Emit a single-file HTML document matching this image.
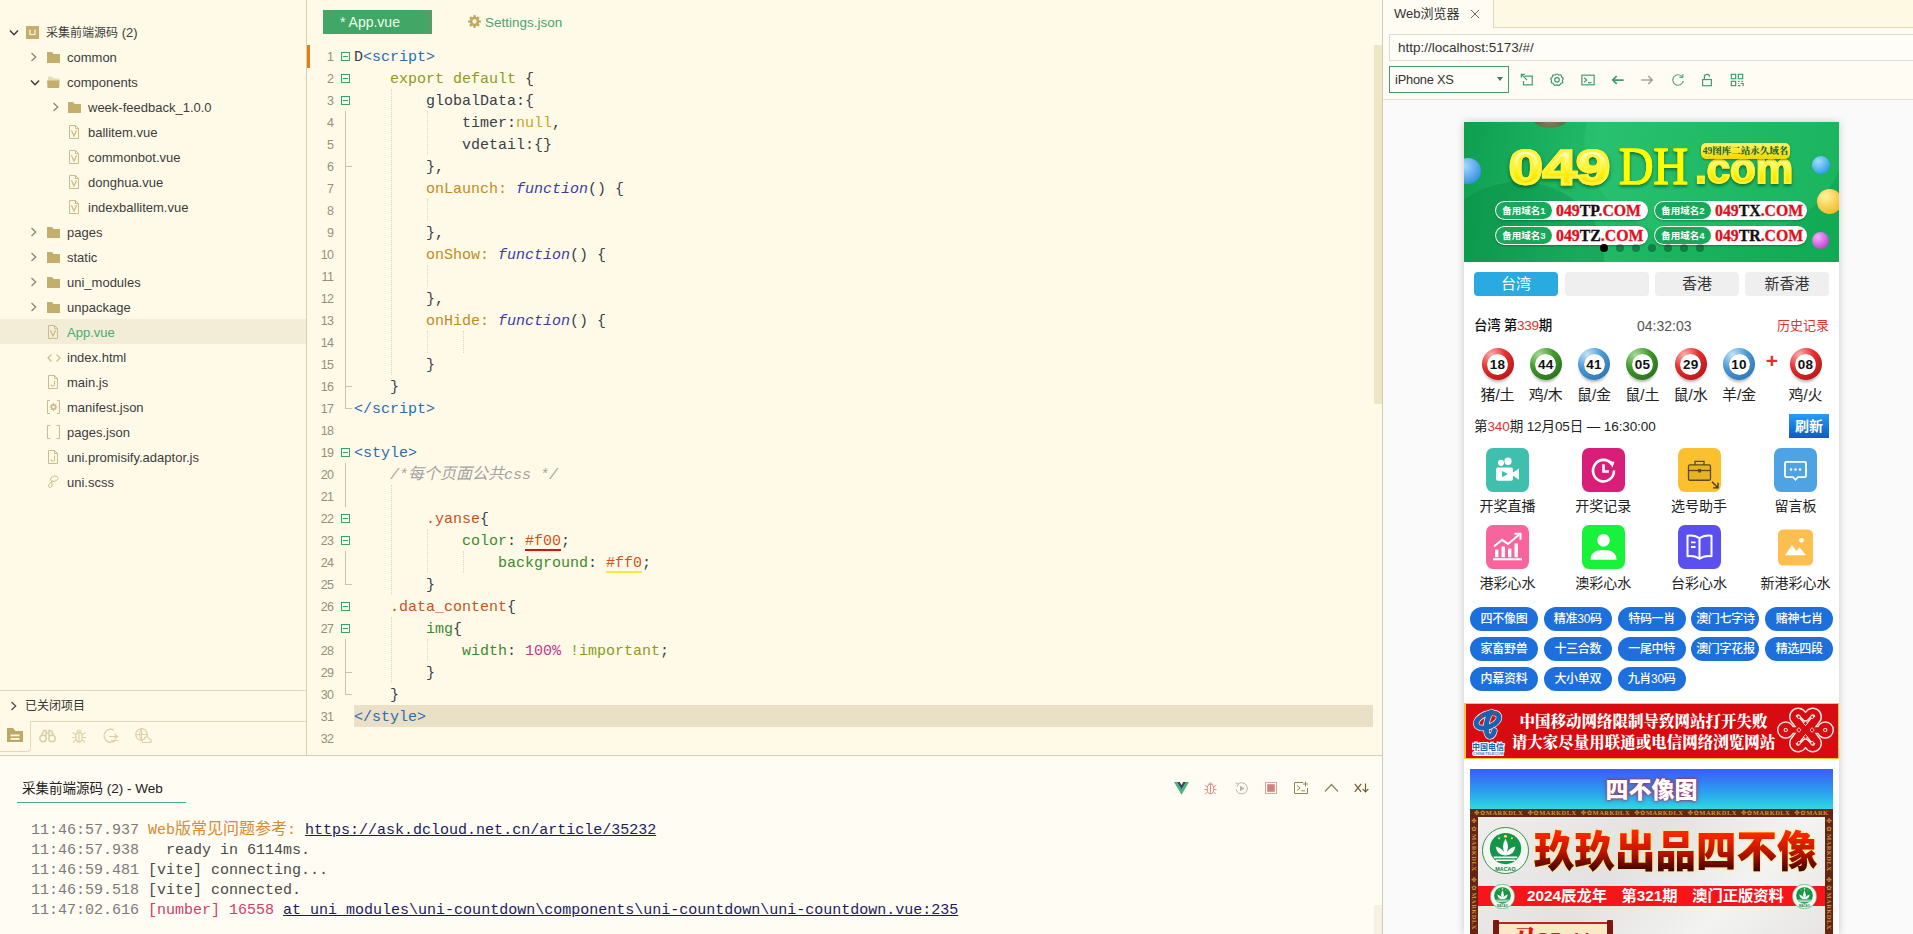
<!DOCTYPE html>
<html lang="zh-CN">
<head>
<meta charset="utf-8">
<title>HBuilderX</title>
<style>
*{box-sizing:border-box;margin:0;padding:0}
html,body{width:1913px;height:934px;overflow:hidden;background:#fffae8}
body{position:relative;font-family:"Liberation Sans","Noto Sans CJK SC",sans-serif;font-size:13px;color:#3c3c3c}
.abs{position:absolute}
/* ---------- sidebar ---------- */
#side{position:absolute;left:0;top:0;width:307px;height:755px;background:#fffae8;border-right:1px solid #dacfae}
.row{position:absolute;left:0;width:306px;height:25px;line-height:27px;font-size:13px;color:#3c3c3c;white-space:nowrap}
.row.sel{background:#f3ecd7}
.row .lbl{position:absolute;top:0}
.row svg{position:absolute}
/* ---------- editor ---------- */
#ed{position:absolute;left:307px;top:0;width:1075px;height:755px;background:#fffae8}
.tab1{position:absolute;left:16px;top:10px;width:109px;height:24px;background:linear-gradient(90deg,#42a766 0,#42a766 93%,#5b9b68 100%);color:#e6ffe9;font-size:14px;line-height:25px;padding-left:17px}
.tab2{position:absolute;left:178px;top:10px;height:24px;line-height:25.5px;font-size:13.5px;color:#46a570}
.ln{position:absolute;left:0;width:27px;text-align:right;font-family:"Liberation Sans",sans-serif;font-size:12.5px;letter-spacing:-0.7px;color:#969078;height:22px;line-height:25.5px;width:26.2px}
.cl{position:absolute;left:47px;height:22px;line-height:25.5px;font-family:"Liberation Mono","Noto Sans CJK SC",monospace;font-size:15px;color:#39404a;white-space:pre}
.fb{position:absolute;left:34px;width:9px;height:9px;border:1px solid #3f9d72}
.fb:after{content:"";position:absolute;left:1px;top:3px;width:5px;height:1px;background:#3f9d72}
.tg{color:#2b6cb3}.kw{color:#8c9a22}.nl{color:#c7a526}.pr{color:#bf8c1c}.fn{color:#3a3aa8;font-style:italic}
.ul{position:relative}.ul:after{content:"";position:absolute;left:0;right:0;bottom:-1px;height:2px;background:var(--u)}
.cm{color:#a3a3a3;font-style:italic}.cj{font-size:16px}.sl{color:#c8521e}.cp{color:#3c8a2e}.hx{color:#d0521c}.nm{color:#c4368c}.im{color:#8c9a22}
/* ---------- console ---------- */
#con{position:absolute;left:0;top:755px;width:1382px;height:179px;background:#fffcf3;border-top:1px solid #dacfae}
.cline{position:absolute;left:31px;height:20px;line-height:23.5px;font-family:"Liberation Mono","Noto Sans CJK SC",monospace;font-size:15px;color:#4a4a4a;white-space:pre}
.ts{color:#7b7b7b}.or{color:#d98a2e}.lk{color:#1b1b64;text-decoration:underline}.pk{color:#d0406c}
/* ---------- right panel ---------- */
#rp{position:absolute;left:1382px;top:0;width:531px;height:934px;background:#fafafa;border-left:1px solid #d2cbb4}

/* ---------- phone ---------- */
#ph{position:absolute;top:122px;width:375px;height:812px;background:#fff;box-shadow:0 0 8px rgba(0,0,0,.2);overflow:hidden;font-family:"Liberation Sans","Noto Sans CJK SC",sans-serif}
#ph .abs{position:absolute}
.bn{position:absolute;left:0;top:0;width:375px;height:140px;overflow:hidden;background:linear-gradient(100deg,#0e9f50 0%,#22bb69 35%,#18b25c 65%,#10aa54 100%)}
.big{position:absolute;white-space:nowrap;line-height:normal;transform-origin:0 50%;background:linear-gradient(#ffffd8 18%,#fff75a 45%,#ffee00 62%,#ffd800 88%);-webkit-background-clip:text;background-clip:text;color:transparent;filter:drop-shadow(0 2px 1.5px rgba(0,70,20,.6))}
.big.b1{font-family:"Liberation Sans",sans-serif;font-weight:700;-webkit-text-stroke:2.8px #fff23a;paint-order:stroke fill}
.big.b2{font-family:"Liberation Serif",serif;font-weight:400;background:#ffff00;-webkit-background-clip:text;background-clip:text;-webkit-text-stroke:1.2px #ffff00}
.ytag{position:absolute;width:89px;height:16px;border-radius:5px;background:linear-gradient(#fff36a,#f4d800);color:#1c6a2a;font-family:"Liberation Serif","Noto Serif CJK SC",serif;font-weight:900;font-size:9.5px;line-height:16px;text-align:center;white-space:nowrap;box-shadow:0 1px 2px rgba(0,60,20,.5)}
.dp{position:absolute;width:153px;height:19px;border-radius:10px;background:#fff;overflow:hidden;white-space:nowrap;box-shadow:0 1px 2px rgba(0,60,20,.4)}
.dp .dl{position:absolute;left:1px;top:1px;width:56px;height:17px;border-radius:9px;background:#19a85a;color:#fff;font-size:9.5px;line-height:17px;text-align:center;font-weight:700}
.dp .dd{position:absolute;left:61px;top:0;line-height:20px;font-family:"Liberation Serif",serif;font-weight:700;font-size:15.8px;color:#111;letter-spacing:0;-webkit-text-stroke:0.3px currentColor}
.dp .dd i{font-style:normal;color:#e0101c}
.rt{position:absolute;width:84px;height:24px;border-radius:4px;background:#efefef;color:#333;font-size:15px;line-height:24px;text-align:center}
.rt.on{background:#29abe2;color:#fff}
.t14{position:absolute;font-size:13.5px;line-height:20px;white-space:nowrap}
.rd{color:#e3312d}
.ball{position:absolute;width:32px;height:32px;border-radius:50%;box-shadow:0 4px 3px -2px rgba(0,0,0,.3)}
.ball b{position:absolute;left:5.5px;top:5.5px;width:21px;height:21px;border-radius:50%;background:#fff;color:#111;font-size:13.5px;line-height:21px;text-align:center;font-weight:700;letter-spacing:0.2px;box-shadow:0 0 1px rgba(0,0,0,.35)}
.bl{position:absolute;width:60px;text-align:center;font-size:15px;line-height:20px;color:#222;white-space:nowrap}
.rf{position:absolute;width:40px;height:24px;background:linear-gradient(#2a9df4,#0b5cc2);color:#fff;font-size:14px;font-weight:700;line-height:24px;text-align:center}
.il{position:absolute;width:90px;text-align:center;font-size:14px;line-height:20px;color:#222;white-space:nowrap}
.pl{position:absolute;width:68px;height:24px;border-radius:12px;background:#1d6fdb;color:#fff;font-size:12px;line-height:25px;text-align:center;white-space:nowrap;letter-spacing:-0.3px;font-weight:500}
.rn{position:absolute;width:375px;height:56px;background:#d60c10;border:1px solid #f8c832;border-left-width:2px}
.rl{position:absolute;left:0;width:373px;text-align:center;font-family:"Liberation Serif","Noto Serif CJK SC",serif;font-weight:900;font-size:15.5px;line-height:21px;color:#fff;white-space:nowrap}
.tt{position:absolute;width:363px;height:41px;background:linear-gradient(#3d5cf8 0%,#2a9ef0 55%,#2fdde0 100%);color:#fff;font-size:23px;font-weight:900;line-height:42px;text-align:center;text-shadow:0 0 3px #a83060,0 0 2px #a83060,0 0 5px rgba(150,40,110,.6)}
.pic{position:absolute;width:363px;height:140px;background:#662412;padding:8px 8px 0 8px}
.mk{position:absolute;color:#c8963e;font-family:"Liberation Serif","DejaVu Sans",serif;font-weight:700;font-size:6.5px;line-height:8px;white-space:nowrap;overflow:hidden;letter-spacing:0.45px}
.pin{position:relative;width:347px;height:132px;background:linear-gradient(135deg,#efeeec,#e3e2e0 40%,#f3f3f1 70%,#e5e4e2);overflow:hidden}
.hl{position:absolute;left:56px;top:9px;white-space:nowrap;font-size:40.5px;line-height:48px;font-weight:900;letter-spacing:0;transform:scaleY(1.08);transform-origin:50% 0;background:linear-gradient(#ff2800 12%,#c01400 50%,#2a0000 92%);-webkit-background-clip:text;background-clip:text;color:transparent;filter:drop-shadow(0 0 0.7px #ffcf00) drop-shadow(0 0 0.7px #ffcf00) drop-shadow(0 0 1px #ffe680)}
.strip{position:absolute;left:0;top:69px;width:347px;height:20px;background:#f81418;color:#fff;font-size:15.3px;font-weight:700;line-height:19px;text-align:center;white-space:nowrap;word-spacing:3px;text-indent:8px}
.scr{position:absolute;left:19px;top:105px;width:112px;height:40px;background:#fbe8c6;border-top:2px solid #b8281e;overflow:hidden;font-family:"Liberation Serif","Noto Serif CJK SC",serif;font-weight:900;font-size:24px;line-height:26px;color:#e01818;text-align:center;white-space:nowrap;padding-top:3px}
.rod{position:absolute;top:103px;width:6px;height:40px;background:#7a1812;border-radius:1px}
</style>
</head>
<body>
<div id="side">
<div class="row" style="top:19px"><svg style="left:8.5px;top:9.5px" width="10" height="8" viewBox="0 0 10 8"><path d="M1 1.5 L5 5.7 L9 1.5" fill="none" stroke="#3a3a3a" stroke-width="1.5"/></svg><svg style="left:25.5px;top:6.5px" width="13" height="13" viewBox="0 0 13 13"><rect width="13" height="13" fill="#c4ae6b"/><path d="M4 3.5 V8.5 H9 V3.5" fill="none" stroke="#fffae8" stroke-width="1.2"/></svg><span class="lbl" style="left:46px"><span style="font-size:12px">采集前端源码</span> (2)</span></div>
<div class="row" style="top:44px"><svg style="left:30px;top:8px" width="8" height="10" viewBox="0 0 8 10"><path d="M1.5 1 L5.7 5 L1.5 9" fill="none" stroke="#8c8670" stroke-width="1.3"/></svg><svg style="left:46.7px;top:7.5px" width="13" height="11" viewBox="0 0 13 11"><path d="M0 0 H5 L6.5 2 H13 V11 H0 Z" fill="#c4ae6b"/></svg><span class="lbl" style="left:67px">common</span></div>
<div class="row" style="top:69px"><svg style="left:29.5px;top:9.5px" width="10" height="8" viewBox="0 0 10 8"><path d="M1 1.5 L5 5.7 L9 1.5" fill="none" stroke="#3a3a3a" stroke-width="1.5"/></svg><svg style="left:46.5px;top:6.5px" width="13" height="12" viewBox="0 0 13 12"><path d="M1 0.5 H5 L6.5 2.5 H12.5 V11 H1 Z" fill="#e6dcb8"/><path d="M0 4.5 H12.5 L12 12 H0.5 Z" fill="#c4ae6b"/></svg><span class="lbl" style="left:67px">components</span></div>
<div class="row" style="top:94px"><svg style="left:52px;top:8px" width="8" height="10" viewBox="0 0 8 10"><path d="M1.5 1 L5.7 5 L1.5 9" fill="none" stroke="#8c8670" stroke-width="1.3"/></svg><svg style="left:67.7px;top:7.5px" width="13" height="11" viewBox="0 0 13 11"><path d="M0 0 H5 L6.5 2 H13 V11 H0 Z" fill="#c4ae6b"/></svg><span class="lbl" style="left:88px">week-feedback_1.0.0</span></div>
<div class="row" style="top:119px"><svg style="left:68px;top:6px" width="12" height="14" viewBox="0 0 12 14"><path d="M1.5 0.5 H7.5 L10.5 3.5 V13.5 H1.5 Z" fill="none" stroke="#cbbd8a" stroke-width="1"/><path d="M7.5 0.5 V3.5 H10.5" fill="none" stroke="#cbbd8a" stroke-width="1"/><path d="M3.4 5.3 L6 11 L8.6 5.3" fill="none" stroke="#cbbd8a" stroke-width="1.3"/></svg><span class="lbl" style="left:88px">ballitem.vue</span></div>
<div class="row" style="top:144px"><svg style="left:68px;top:6px" width="12" height="14" viewBox="0 0 12 14"><path d="M1.5 0.5 H7.5 L10.5 3.5 V13.5 H1.5 Z" fill="none" stroke="#cbbd8a" stroke-width="1"/><path d="M7.5 0.5 V3.5 H10.5" fill="none" stroke="#cbbd8a" stroke-width="1"/><path d="M3.4 5.3 L6 11 L8.6 5.3" fill="none" stroke="#cbbd8a" stroke-width="1.3"/></svg><span class="lbl" style="left:88px">commonbot.vue</span></div>
<div class="row" style="top:169px"><svg style="left:68px;top:6px" width="12" height="14" viewBox="0 0 12 14"><path d="M1.5 0.5 H7.5 L10.5 3.5 V13.5 H1.5 Z" fill="none" stroke="#cbbd8a" stroke-width="1"/><path d="M7.5 0.5 V3.5 H10.5" fill="none" stroke="#cbbd8a" stroke-width="1"/><path d="M3.4 5.3 L6 11 L8.6 5.3" fill="none" stroke="#cbbd8a" stroke-width="1.3"/></svg><span class="lbl" style="left:88px">donghua.vue</span></div>
<div class="row" style="top:194px"><svg style="left:68px;top:6px" width="12" height="14" viewBox="0 0 12 14"><path d="M1.5 0.5 H7.5 L10.5 3.5 V13.5 H1.5 Z" fill="none" stroke="#cbbd8a" stroke-width="1"/><path d="M7.5 0.5 V3.5 H10.5" fill="none" stroke="#cbbd8a" stroke-width="1"/><path d="M3.4 5.3 L6 11 L8.6 5.3" fill="none" stroke="#cbbd8a" stroke-width="1.3"/></svg><span class="lbl" style="left:88px">indexballitem.vue</span></div>
<div class="row" style="top:219px"><svg style="left:30px;top:8px" width="8" height="10" viewBox="0 0 8 10"><path d="M1.5 1 L5.7 5 L1.5 9" fill="none" stroke="#8c8670" stroke-width="1.3"/></svg><svg style="left:46.7px;top:7.5px" width="13" height="11" viewBox="0 0 13 11"><path d="M0 0 H5 L6.5 2 H13 V11 H0 Z" fill="#c4ae6b"/></svg><span class="lbl" style="left:67px">pages</span></div>
<div class="row" style="top:244px"><svg style="left:30px;top:8px" width="8" height="10" viewBox="0 0 8 10"><path d="M1.5 1 L5.7 5 L1.5 9" fill="none" stroke="#8c8670" stroke-width="1.3"/></svg><svg style="left:46.7px;top:7.5px" width="13" height="11" viewBox="0 0 13 11"><path d="M0 0 H5 L6.5 2 H13 V11 H0 Z" fill="#c4ae6b"/></svg><span class="lbl" style="left:67px">static</span></div>
<div class="row" style="top:269px"><svg style="left:30px;top:8px" width="8" height="10" viewBox="0 0 8 10"><path d="M1.5 1 L5.7 5 L1.5 9" fill="none" stroke="#8c8670" stroke-width="1.3"/></svg><svg style="left:46.7px;top:7.5px" width="13" height="11" viewBox="0 0 13 11"><path d="M0 0 H5 L6.5 2 H13 V11 H0 Z" fill="#c4ae6b"/></svg><span class="lbl" style="left:67px">uni_modules</span></div>
<div class="row" style="top:294px"><svg style="left:30px;top:8px" width="8" height="10" viewBox="0 0 8 10"><path d="M1.5 1 L5.7 5 L1.5 9" fill="none" stroke="#8c8670" stroke-width="1.3"/></svg><svg style="left:46.7px;top:7.5px" width="13" height="11" viewBox="0 0 13 11"><path d="M0 0 H5 L6.5 2 H13 V11 H0 Z" fill="#c4ae6b"/></svg><span class="lbl" style="left:67px">unpackage</span></div>
<div class="row sel" style="top:319px"><svg style="left:47px;top:6px" width="12" height="14" viewBox="0 0 12 14"><path d="M1.5 0.5 H7.5 L10.5 3.5 V13.5 H1.5 Z" fill="none" stroke="#cbbd8a" stroke-width="1"/><path d="M7.5 0.5 V3.5 H10.5" fill="none" stroke="#cbbd8a" stroke-width="1"/><path d="M3.4 5.3 L6 11 L8.6 5.3" fill="none" stroke="#cbbd8a" stroke-width="1.3"/></svg><span class="lbl" style="left:67px;color:#45ad6e">App.vue</span></div>
<div class="row" style="top:344px"><svg style="left:46.5px;top:8.5px" width="14" height="10" viewBox="0 0 14 10"><path d="M4.5 1.5 L1 5 L4.5 8.5 M9.5 1.5 L13 5 L9.5 8.5" fill="none" stroke="#cbbd8a" stroke-width="1.2"/></svg><span class="lbl" style="left:67px">index.html</span></div>
<div class="row" style="top:369px"><svg style="left:47px;top:6px" width="12" height="14" viewBox="0 0 12 14"><path d="M1.5 0.5 H7.5 L10.5 3.5 V13.5 H1.5 Z" fill="none" stroke="#cbbd8a" stroke-width="1"/><path d="M7.5 0.5 V3.5 H10.5" fill="none" stroke="#cbbd8a" stroke-width="1"/><path d="M7.5 5.5 V10 Q7.5 11 6.2 11 H4.2 V9.5" fill="none" stroke="#cbbd8a" stroke-width="1"/></svg><span class="lbl" style="left:67px">main.js</span></div>
<div class="row" style="top:394px"><svg style="left:47px;top:6px" width="13" height="14" viewBox="0 0 13 14"><path d="M3 0.5 H0.5 V13.5 H3 M10 0.5 H12.5 V13.5 H10" fill="none" stroke="#cbbd8a" stroke-width="1"/><circle cx="6.5" cy="7" r="2.1" fill="none" stroke="#cbbd8a" stroke-width="1.6"/><path d="M6.5 3.1 V4.5 M6.5 9.5 V10.9 M2.6 7 H4 M9 7 H10.4 M3.8 4.3 L4.8 5.3 M8.2 8.7 L9.2 9.7 M9.2 4.3 L8.2 5.3 M3.8 9.7 L4.8 8.7" stroke="#cbbd8a" stroke-width="1.2"/></svg><span class="lbl" style="left:67px">manifest.json</span></div>
<div class="row" style="top:419px"><svg style="left:47px;top:6px" width="13" height="14" viewBox="0 0 13 14"><path d="M3.5 0.5 H0.5 V13.5 H3.5 M9.5 0.5 H12.5 V13.5 H9.5" fill="none" stroke="#cbbd8a" stroke-width="1"/></svg><span class="lbl" style="left:67px">pages.json</span></div>
<div class="row" style="top:444px"><svg style="left:47px;top:6px" width="12" height="14" viewBox="0 0 12 14"><path d="M1.5 0.5 H7.5 L10.5 3.5 V13.5 H1.5 Z" fill="none" stroke="#cbbd8a" stroke-width="1"/><path d="M7.5 0.5 V3.5 H10.5" fill="none" stroke="#cbbd8a" stroke-width="1"/><path d="M7.5 5.5 V10 Q7.5 11 6.2 11 H4.2 V9.5" fill="none" stroke="#cbbd8a" stroke-width="1"/></svg><span class="lbl" style="left:67px">uni.promisify.adaptor.js</span></div>
<div class="row" style="top:469px"><svg style="left:47px;top:6px" width="13" height="14" viewBox="0 0 13 14"><path d="M11.5 3.5 Q11 0.8 7.5 1 Q4 1.5 3.5 4 Q3.5 6 6 6.5 Q9.5 6.5 11 4 M5 6.5 Q2 8 1.5 10.5 Q1.5 12.8 3.5 12.5 Q5.5 12 5 9 Q4.8 7.5 5 6.5" fill="none" stroke="#cbbd8a" stroke-width="1"/></svg><span class="lbl" style="left:67px">uni.scss</span></div>
<div class="abs" style="left:0;top:690px;width:306px;height:1px;background:#e3d9b5"></div>
<div class="row" style="top:693px"><svg style="left:10px;top:8px" width="8" height="10" viewBox="0 0 8 10"><path d="M1.5 1 L5.7 5 L1.5 9" fill="none" stroke="#4a4a4a" stroke-width="1.3"/></svg><span class="lbl" style="left:25px;color:#333;font-size:12px">已关闭项目</span></div>
<div class="abs" style="left:30px;top:721px;width:276px;height:1px;background:#e3d9b5"></div>
<div class="abs" style="left:-1px;top:721px;width:32px;height:31px;border:1px solid #e3d9b5;border-top:none;border-bottom-right-radius:4px;background:#fffae8"></div>
<svg class="abs" style="left:7px;top:728px" width="16" height="14" viewBox="0 0 16 14"><path d="M0 0 H6 L8.5 3 H16 V14 H0 Z" fill="#bda866"/><rect x="3.5" y="6.5" width="9" height="1.8" fill="#fffae8"/><rect x="3.5" y="10" width="9" height="1.8" fill="#fffae8"/></svg>
<svg class="abs" style="left:39px;top:729px" width="17" height="14" viewBox="0 0 17 14"><circle cx="4" cy="9.5" r="3.2" fill="none" stroke="#dbd1a8" stroke-width="1.6"/><circle cx="13" cy="9.5" r="3.2" fill="none" stroke="#dbd1a8" stroke-width="1.6"/><path d="M2.5 6 L5 1.5 H7 V7 M14.5 6 L12 1.5 H10 V7 M7 4 H10" fill="none" stroke="#dbd1a8" stroke-width="1.6"/></svg>
<svg class="abs" style="left:71px;top:728px" width="16" height="16" viewBox="0 0 16 16"><ellipse cx="8" cy="9" rx="3.2" ry="5" fill="none" stroke="#dbd1a8" stroke-width="1.3"/><path d="M8 4 V14 M5.5 3.5 Q8 0.5 10.5 3.5 M4.8 6.5 L1.5 4.5 M11.2 6.5 L14.5 4.5 M4.8 9.5 H1 M11.2 9.5 H15 M5 12 L2 14.5 M11 12 L14 14.5" fill="none" stroke="#dbd1a8" stroke-width="1.2"/></svg>
<svg class="abs" style="left:103px;top:728px" width="17" height="16" viewBox="0 0 17 16"><path d="M11 2.2 A6.5 6.5 0 1 0 12.5 12" fill="none" stroke="#dbd1a8" stroke-width="1.3"/><path d="M6 8.5 H14 M11.5 6 L14.5 8.5 L11.5 11 M8 12.5 H15.5" fill="none" stroke="#dbd1a8" stroke-width="1.2"/></svg>
<svg class="abs" style="left:135px;top:728px" width="17" height="16" viewBox="0 0 17 16"><circle cx="6.5" cy="6.5" r="5.8" fill="none" stroke="#dbd1a8" stroke-width="1.2"/><path d="M6.5 0.7 V12 M0.7 6.5 H12 M6.5 0.7 Q2.5 6.5 6.5 12.3" fill="none" stroke="#dbd1a8" stroke-width="1"/><path d="M7.5 14.5 H14.5 Q16.5 14.5 16.2 12.5 Q16 11 14.3 11 Q13.8 8.5 11.3 8.8 Q9.3 9.2 9.2 11.2 Q7 11.3 7 13 Q7 14.5 7.5 14.5 Z" fill="#fffae8" stroke="#dbd1a8" stroke-width="1.2"/></svg>
</div>
<div id="ed">
<div class="tab1">* App.vue</div>
<svg class="abs" style="left:161px;top:15px" width="13" height="13" viewBox="-6.5 -6.5 13 13"><circle r="3.4" fill="none" stroke="#bfa960" stroke-width="2.5"/><g fill="#bfa960"><rect x="-1.25" y="-6.3" width="2.5" height="2.6" transform="rotate(0)"/><rect x="-1.25" y="-6.3" width="2.5" height="2.6" transform="rotate(45)"/><rect x="-1.25" y="-6.3" width="2.5" height="2.6" transform="rotate(90)"/><rect x="-1.25" y="-6.3" width="2.5" height="2.6" transform="rotate(135)"/><rect x="-1.25" y="-6.3" width="2.5" height="2.6" transform="rotate(180)"/><rect x="-1.25" y="-6.3" width="2.5" height="2.6" transform="rotate(225)"/><rect x="-1.25" y="-6.3" width="2.5" height="2.6" transform="rotate(270)"/><rect x="-1.25" y="-6.3" width="2.5" height="2.6" transform="rotate(315)"/></g></svg>
<div class="tab2">Settings.json</div>
<div class="abs" style="left:0;top:45px;width:3px;height:23px;background:#e07f12"></div>
<div class="abs" style="left:47px;top:705px;width:1019px;height:22px;background:#e9e0c7"></div>
<div class="abs" style="left:84px;top:89px;width:0;height:286px;border-left:1px dotted #ddd5bc"></div>
<div class="abs" style="left:120px;top:111px;width:0;height:44px;border-left:1px dotted #ddd5bc"></div>
<div class="abs" style="left:120px;top:199px;width:0;height:22px;border-left:1px dotted #ddd5bc"></div>
<div class="abs" style="left:120px;top:265px;width:0;height:22px;border-left:1px dotted #ddd5bc"></div>
<div class="abs" style="left:120px;top:331px;width:0;height:22px;border-left:1px dotted #ddd5bc"></div>
<div class="abs" style="left:156px;top:331px;width:0;height:22px;border-left:1px dotted #ddd5bc"></div>
<div class="abs" style="left:84px;top:485px;width:0;height:110px;border-left:1px dotted #ddd5bc"></div>
<div class="abs" style="left:120px;top:529px;width:0;height:44px;border-left:1px dotted #ddd5bc"></div>
<div class="abs" style="left:156px;top:551px;width:0;height:22px;border-left:1px dotted #ddd5bc"></div>
<div class="abs" style="left:84px;top:617px;width:0;height:66px;border-left:1px dotted #ddd5bc"></div>
<div class="abs" style="left:120px;top:639px;width:0;height:22px;border-left:1px dotted #ddd5bc"></div>
<div class="abs" style="left:38px;top:111px;width:1px;height:298px;background:#c9c3ad"></div>
<div class="abs" style="left:38px;top:166px;width:7px;height:1px;background:#c9c3ad"></div>
<div class="abs" style="left:38px;top:386px;width:7px;height:1px;background:#c9c3ad"></div>
<div class="abs" style="left:38px;top:408px;width:7px;height:1px;background:#c9c3ad"></div>
<div class="abs" style="left:38px;top:463px;width:1px;height:44px;background:#c9c3ad"></div>
<div class="abs" style="left:38px;top:551px;width:1px;height:34px;background:#c9c3ad"></div>
<div class="abs" style="left:38px;top:584px;width:7px;height:1px;background:#c9c3ad"></div>
<div class="abs" style="left:38px;top:639px;width:1px;height:56px;background:#c9c3ad"></div>
<div class="abs" style="left:38px;top:672px;width:7px;height:1px;background:#c9c3ad"></div>
<div class="abs" style="left:38px;top:694px;width:7px;height:1px;background:#c9c3ad"></div>
<div class="ln" style="top:45px">1</div>
<div class="fb" style="top:52px"></div>
<div class="cl" style="top:45px">D<span class="tg">&lt;script&gt;</span></div>
<div class="ln" style="top:67px">2</div>
<div class="fb" style="top:74px"></div>
<div class="cl" style="top:67px">    <span class="kw">export default</span> {</div>
<div class="ln" style="top:89px">3</div>
<div class="fb" style="top:96px"></div>
<div class="cl" style="top:89px">        globalData:{</div>
<div class="ln" style="top:111px">4</div>
<div class="cl" style="top:111px">            timer:<span class="nl">null</span>,</div>
<div class="ln" style="top:133px">5</div>
<div class="cl" style="top:133px">            vdetail:{}</div>
<div class="ln" style="top:155px">6</div>
<div class="cl" style="top:155px">        },</div>
<div class="ln" style="top:177px">7</div>
<div class="cl" style="top:177px">        <span class="pr">onLaunch:</span> <span class="fn">function</span>() {</div>
<div class="ln" style="top:199px">8</div>
<div class="ln" style="top:221px">9</div>
<div class="cl" style="top:221px">        },</div>
<div class="ln" style="top:243px">10</div>
<div class="cl" style="top:243px">        <span class="pr">onShow:</span> <span class="fn">function</span>() {</div>
<div class="ln" style="top:265px">11</div>
<div class="ln" style="top:287px">12</div>
<div class="cl" style="top:287px">        },</div>
<div class="ln" style="top:309px">13</div>
<div class="cl" style="top:309px">        <span class="pr">onHide:</span> <span class="fn">function</span>() {</div>
<div class="ln" style="top:331px">14</div>
<div class="ln" style="top:353px">15</div>
<div class="cl" style="top:353px">        }</div>
<div class="ln" style="top:375px">16</div>
<div class="cl" style="top:375px">    }</div>
<div class="ln" style="top:397px">17</div>
<div class="cl" style="top:397px"><span class="tg">&lt;/script&gt;</span></div>
<div class="ln" style="top:419px">18</div>
<div class="ln" style="top:441px">19</div>
<div class="fb" style="top:448px"></div>
<div class="cl" style="top:441px"><span class="tg">&lt;style&gt;</span></div>
<div class="ln" style="top:463px">20</div>
<div class="cl" style="top:463px">    <span class="cm">/*<span class="cj">每个页面公共</span>css */</span></div>
<div class="ln" style="top:485px">21</div>
<div class="ln" style="top:507px">22</div>
<div class="fb" style="top:514px"></div>
<div class="cl" style="top:507px">        <span class="sl">.yanse</span>{</div>
<div class="ln" style="top:529px">23</div>
<div class="fb" style="top:536px"></div>
<div class="cl" style="top:529px">            <span class="cp">color</span>: <span class="hx ul" style="--u:#dc1010">#f00</span>;</div>
<div class="ln" style="top:551px">24</div>
<div class="cl" style="top:551px">                <span class="cp">background</span>: <span class="hx ul" style="--u:#f2ec38">#ff0</span>;</div>
<div class="ln" style="top:573px">25</div>
<div class="cl" style="top:573px">        }</div>
<div class="ln" style="top:595px">26</div>
<div class="fb" style="top:602px"></div>
<div class="cl" style="top:595px">    <span class="sl">.data_content</span>{</div>
<div class="ln" style="top:617px">27</div>
<div class="fb" style="top:624px"></div>
<div class="cl" style="top:617px">        <span class="cp">img</span>{</div>
<div class="ln" style="top:639px">28</div>
<div class="cl" style="top:639px">            <span class="cp">width</span>: <span class="nm">100%</span> <span class="im">!important</span>;</div>
<div class="ln" style="top:661px">29</div>
<div class="cl" style="top:661px">        }</div>
<div class="ln" style="top:683px">30</div>
<div class="cl" style="top:683px">    }</div>
<div class="ln" style="top:705px">31</div>
<div class="cl" style="top:705px"><span class="tg">&lt;/style&gt;</span></div>
<div class="ln" style="top:727px">32</div>
<div class="abs" style="left:1067px;top:45px;width:8px;height:359px;background:#eee6c4"></div>
</div>
<div id="con">
<div class="abs" style="left:22px;top:23px;font-size:13.5px;color:#222;line-height:20px">采集前端源码 (2) - Web</div>
<div class="abs" style="left:17px;top:46px;width:169px;height:1px;background:#4aa98a"></div>
<div class="cline" style="top:63px"><span class="ts">11:46:57.937</span> <span class="or">Web<span style="font-size:16px">版常见问题参考</span>: </span><span class="lk">https://ask.dcloud.net.cn/article/35232</span></div>
<div class="cline" style="top:83px"><span class="ts">11:46:57.938</span>   ready in 6114ms.</div>
<div class="cline" style="top:103px"><span class="ts">11:46:59.481</span> [vite] connecting...</div>
<div class="cline" style="top:123px"><span class="ts">11:46:59.518</span> [vite] connected.</div>
<div class="cline" style="top:143px"><span class="ts">11:47:02.616</span> <span class="pk">[number] 16558</span> <span class="lk">at uni_modules\uni-countdown\components\uni-countdown\uni-countdown.vue:235</span></div>
<svg class="abs" style="left:1174px;top:26px" width="15" height="13" viewBox="0 0 15 13"><path d="M0 0 H3 L7.5 7.6 L12 0 H15 L7.5 12.8 Z" fill="#41b883"/><path d="M3 0 H5.8 L7.5 2.9 L9.2 0 H12 L7.5 7.6 Z" fill="#35495e"/></svg>
<svg class="abs" style="left:1204px;top:24.5px" width="13" height="14" viewBox="0 0 13 14"><ellipse cx="6.5" cy="8" rx="3.3" ry="4.8" fill="none" stroke="#e08f8a" stroke-width="1"/><path d="M6.5 3.2 V12.8 M4.3 3.6 Q6.5 0.2 8.7 3.6 M3.3 6 L0.8 4.2 M9.7 6 L12.2 4.2 M3.2 8.5 H0.4 M9.8 8.5 H12.6 M3.6 11 L1 13 M9.4 11 L12 13" fill="none" stroke="#e08f8a" stroke-width="1"/></svg>
<svg class="abs" style="left:1234.5px;top:25px" width="13" height="14" viewBox="0 0 13 14"><path d="M3.2 3 A5.6 5.6 0 1 1 1.2 8.2" fill="none" stroke="#b7b5ac" stroke-width="1"/><path d="M0.6 1.8 L3.4 3.2 L2 5.8" fill="none" stroke="#b7b5ac" stroke-width="1"/><path d="M5 4.8 L9.6 7.5 L5 10.2 Z" fill="#b7b5ac"/></svg>
<svg class="abs" style="left:1265px;top:26px" width="12" height="12" viewBox="0 0 12 12"><rect x="0.5" y="0.5" width="11" height="11" fill="none" stroke="#dba4a2" stroke-width="1"/><rect x="2.2" y="2.2" width="7.6" height="7.6" fill="#d47f80"/></svg>
<svg class="abs" style="left:1294px;top:25px" width="15" height="14" viewBox="0 0 15 14"><path d="M9 1.5 H0.5 V12.5 H13.5 V7" fill="none" stroke="#8b8a52" stroke-width="1"/><path d="M3 4.5 L6 7 L3 9.5 M7.5 9.8 H11" fill="none" stroke="#8b8a52" stroke-width="1"/><path d="M11.5 0.5 V5.5 M9 3 H14" fill="none" stroke="#8b8a52" stroke-width="1"/></svg>
<svg class="abs" style="left:1324px;top:27px" width="15" height="10" viewBox="0 0 15 10"><path d="M1 8.5 L7.5 1.5 L14 8.5" fill="none" stroke="#8c8669" stroke-width="1.3"/></svg>
<svg class="abs" style="left:1353.5px;top:27px" width="16" height="10" viewBox="0 0 16 10"><path d="M0.8 0.8 L7.2 8.8 M7.2 0.8 L0.8 8.8" fill="none" stroke="#6e5d2c" stroke-width="1.2"/><path d="M11.5 0.5 V8.6 M8.6 5.8 L11.5 8.8 L14.4 5.8" fill="none" stroke="#6e5d2c" stroke-width="1.2"/></svg>
<div class="abs" style="left:1374px;top:149px;width:8px;height:30px;background:#f6f1e2"></div>
</div>
<div id="rp">
<div class="abs" style="left:0;top:0;width:530px;height:28px;background:#fdf9e3;border-bottom:1px solid #e3d9b5"></div>
<div class="abs" style="left:0;top:0;width:111px;height:28px;background:#fffcf3;border-right:1px solid #e3d9b5"></div>
<div class="abs" style="left:11px;top:3.5px;font-size:13px;line-height:20px;color:#333">Web浏览器</div>
<svg class="abs" style="left:87px;top:9px" width="10" height="10" viewBox="0 0 10 10"><path d="M1 1 L9 9 M9 1 L1 9" stroke="#666" stroke-width="1"/></svg>
<div class="abs" style="left:0;top:28px;width:530px;height:72px;background:#fffcf3;border-bottom:1px solid #e6dfc4"></div>
<div class="abs" style="left:6px;top:34px;width:540px;height:27px;border:1px solid #dfdcd0;background:#fffdf7;font-size:13.5px;line-height:26px;padding-left:8px;color:#333">http://localhost:5173/#/</div>
<div class="abs" style="left:6px;top:66px;width:120px;height:27px;border:1px solid #3f9d6c;background:#fffdf7;font-size:12.8px;letter-spacing:-0.2px;line-height:26px;padding-left:5px;color:#333">iPhone XS</div>
<div class="abs" style="left:113.5px;top:77px;width:0;height:0;border-left:3.5px solid transparent;border-right:3.5px solid transparent;border-top:4px solid #3b7a57"></div>
<svg class="abs" style="left:137.0px;top:72.5px" width="14" height="14" viewBox="0 0 16 16"><path d="M5 3.5 H14 V13.5 H4 V9" fill="none" stroke="#3f9d6c" stroke-width="1.35"/><path d="M1.5 1.5 L8 8 M1.5 5.5 V1.5 H5.5" fill="none" stroke="#3f9d6c" stroke-width="1.35"/></svg>
<svg class="abs" style="left:167.0px;top:72.5px" width="14" height="14" viewBox="0 0 16 16"><path d="M8 1 L10 2.3 L12.6 2.2 L13.4 4.6 L15.2 6.3 L14.2 8.5 L14.6 11 L12.3 12 L10.9 14.2 L8 13.6 L5.1 14.2 L3.7 12 L1.4 11 L1.8 8.5 L0.8 6.3 L2.6 4.6 L3.4 2.2 L6 2.3 Z" fill="none" stroke="#3f9d6c" stroke-width="1.35" stroke-linejoin="round"/><circle cx="8" cy="7.8" r="2.6" fill="none" stroke="#3f9d6c" stroke-width="1.35"/></svg>
<svg class="abs" style="left:198.0px;top:72.5px" width="14" height="14" viewBox="0 0 16 16"><rect x="1" y="2.5" width="14" height="11" fill="none" stroke="#3f9d6c" stroke-width="1.35"/><path d="M3.5 5.5 L6.5 8 L3.5 10.5 M8 11 H12" fill="none" stroke="#3f9d6c" stroke-width="1.35"/></svg>
<svg class="abs" style="left:228.0px;top:72.5px" width="14" height="14" viewBox="0 0 16 16"><path d="M14.5 8 H2 M6.5 3.5 L2 8 L6.5 12.5" fill="none" stroke="#3f9d6c" stroke-width="2"/></svg>
<svg class="abs" style="left:257.0px;top:72.5px" width="14" height="14" viewBox="0 0 16 16"><path d="M1.5 8 H14 M9.5 3.5 L14 8 L9.5 12.5" fill="none" stroke="#a3a3a3" stroke-width="1.8"/></svg>
<svg class="abs" style="left:288.0px;top:72.5px" width="14" height="14" viewBox="0 0 16 16"><path d="M13 4.5 A6 6 0 1 0 14 9" fill="none" stroke="#5aa880" stroke-width="1.3"/><path d="M13.5 1 V5 H9.5" fill="none" stroke="#5aa880" stroke-width="1.3"/></svg>
<svg class="abs" style="left:317.0px;top:72.5px" width="14" height="14" viewBox="0 0 16 16"><rect x="3" y="7.5" width="10" height="7" fill="none" stroke="#3f9d6c" stroke-width="1.35"/><path d="M5 7.5 V5 A3 3 0 0 1 11 4.2" fill="none" stroke="#3f9d6c" stroke-width="1.35"/></svg>
<svg class="abs" style="left:347.0px;top:72.5px" width="14" height="14" viewBox="0 0 16 16"><rect x="1.5" y="1.5" width="5" height="5" fill="none" stroke="#3f9d6c" stroke-width="1.35"/><rect x="9.5" y="1.5" width="5" height="5" fill="none" stroke="#3f9d6c" stroke-width="1.35"/><rect x="1.5" y="9.5" width="5" height="5" fill="none" stroke="#3f9d6c" stroke-width="1.35"/><path d="M9 9.5 H11 M13 9.5 H15 M9 12 H10 M12 12 H15 V15 M9 14.5 H12" stroke="#3f9d6c" stroke-width="1.35" fill="none"/></svg>
<div id="ph" style="left:81px">
<div class="bn">
<div class="abs" style="left:-30px;top:60px;width:170px;height:150px;border-radius:50%;background:rgba(0,120,60,.25)"></div>
<div class="abs" style="left:120px;top:-80px;width:260px;height:200px;border-radius:50%;background:rgba(60,210,130,.25)"></div>
<div class="big b1" style="left:45px;top:17.6px;font-size:48px;transform:scaleX(1.26)">049</div>
<div class="big b2" style="left:155px;top:14.7px;font-size:52px;transform:scaleX(0.92)">DH</div>
<div class="big b1" style="left:231px;top:23.0px;font-size:42px;-webkit-text-stroke-width:1.8px">.com</div>
<div class="ytag" style="left:237px;top:21px">49图库二站永久域名</div>
<div class="dp" style="left:31px;top:79px"><span class="dl">备用域名1</span><span class="dd"><i>049</i>TP<i>.COM</i></span></div>
<div class="dp" style="left:190px;top:79px"><span class="dl">备用域名2</span><span class="dd"><i>049</i>TX<i>.COM</i></span></div>
<div class="dp" style="left:31px;top:104px"><span class="dl">备用域名3</span><span class="dd"><i>049</i>TZ<i>.COM</i></span></div>
<div class="dp" style="left:190px;top:104px"><span class="dl">备用域名4</span><span class="dd"><i>049</i>TR<i>.COM</i></span></div>
<div class="abs" style="left:136px;top:122px;width:8px;height:8px;border-radius:50%;background:#000"></div>
<div class="abs" style="left:152px;top:122px;width:8px;height:8px;border-radius:50%;background:rgba(0,0,0,.3)"></div>
<div class="abs" style="left:168px;top:122px;width:8px;height:8px;border-radius:50%;background:rgba(0,0,0,.3)"></div>
<div class="abs" style="left:184px;top:122px;width:8px;height:8px;border-radius:50%;background:rgba(0,0,0,.3)"></div>
<div class="abs" style="left:200px;top:122px;width:8px;height:8px;border-radius:50%;background:rgba(0,0,0,.3)"></div>
<div class="abs" style="left:216px;top:122px;width:8px;height:8px;border-radius:50%;background:rgba(0,0,0,.3)"></div>
<div class="abs" style="left:232px;top:122px;width:8px;height:8px;border-radius:50%;background:rgba(0,0,0,.3)"></div>
<div class="abs" style="left:-9px;top:36px;width:26px;height:26px;border-radius:50%;background:radial-gradient(circle at 35% 30%,#a8dcff,#1677d8)"></div>
<div class="abs" style="left:348px;top:34px;width:18px;height:18px;border-radius:50%;background:radial-gradient(circle at 35% 30%,#9fe0ff,#1286e0)"></div>
<div class="abs" style="left:353px;top:67px;width:25px;height:25px;border-radius:50%;background:radial-gradient(circle at 35% 30%,#fff3a0,#f0a800)"></div>
<div class="abs" style="left:348px;top:110px;width:17px;height:17px;border-radius:50%;background:radial-gradient(circle at 35% 30%,#f5b0ff,#b020c0)"></div>
<div class="abs" style="left:69px;top:-12px;width:34px;height:18px;border-radius:50%;background:radial-gradient(circle at 50% 60%,#8a7a5a,#4d6b3a)"></div>
</div>
<div class="rt on" style="left:10px;top:150px">台湾</div>
<div class="rt" style="left:100.5px;top:150px"></div>
<div class="rt" style="left:191px;top:150px">香港</div>
<div class="rt" style="left:281px;top:150px">新香港</div>
<div class="t14" style="left:10px;top:194px;color:#111;font-weight:500;letter-spacing:-0.3px">台湾 第<span class="rd">339</span>期</div>
<div class="t14" style="left:173px;top:194px;color:#555;font-size:14px">04:32:03</div>
<div class="t14" style="right:10px;top:194px;color:#e3312d;font-size:13px">历史记录</div>
<div class="ball" style="left:17.5px;top:226px;background:radial-gradient(circle at 30% 22%,#ffb0b0 0%,#e62e2e 42%,#b41414 85%)"><b>18</b></div>
<div class="bl" style="left:3.5px;top:263px">猪/土</div>
<div class="ball" style="left:65.79999999999995px;top:226px;background:radial-gradient(circle at 30% 22%,#a8dc98 0%,#3f9a2c 42%,#276f16 85%)"><b>44</b></div>
<div class="bl" style="left:51.799999999999955px;top:263px">鸡/木</div>
<div class="ball" style="left:114px;top:226px;background:radial-gradient(circle at 30% 22%,#c4e6fa 0%,#4a9ad8 42%,#2a74b4 85%)"><b>41</b></div>
<div class="bl" style="left:100px;top:263px">鼠/金</div>
<div class="ball" style="left:162.4000000000001px;top:226px;background:radial-gradient(circle at 30% 22%,#a8dc98 0%,#3f9a2c 42%,#276f16 85%)"><b>05</b></div>
<div class="bl" style="left:148.4000000000001px;top:263px">鼠/土</div>
<div class="ball" style="left:210.70000000000005px;top:226px;background:radial-gradient(circle at 30% 22%,#ffb0b0 0%,#e62e2e 42%,#b41414 85%)"><b>29</b></div>
<div class="bl" style="left:196.70000000000005px;top:263px">鼠/水</div>
<div class="ball" style="left:259px;top:226px;background:radial-gradient(circle at 30% 22%,#c4e6fa 0%,#4a9ad8 42%,#2a74b4 85%)"><b>10</b></div>
<div class="bl" style="left:245px;top:263px">羊/金</div>
<div class="ball" style="left:325.5px;top:226px;background:radial-gradient(circle at 30% 22%,#ffb0b0 0%,#e62e2e 42%,#b41414 85%)"><b>08</b></div>
<div class="bl" style="left:311.5px;top:263px">鸡/火</div>
<div class="abs" style="left:301px;top:227px;width:14px;font-size:21px;font-weight:700;line-height:24px;color:#e3312d;text-align:center">+</div>
<div class="t14" style="left:10px;top:295px;color:#222;letter-spacing:-0.1px">第<span class="rd">340</span>期 12月05日 — 16:30:00</div>
<div class="rf" style="left:325px;top:292px">刷新</div>
<svg class="abs" style="left:22.0px;top:326px" width="43" height="44" viewBox="0 0 43 43" preserveAspectRatio="none"><rect width="43" height="43" rx="7" fill="#3fbfad"/><rect x="10" y="19" width="17" height="13" rx="2" fill="#fff"/><path d="M27 24 L33 20 V31 L27 27 Z" fill="#fff"/><circle cx="15" cy="14.5" r="3" fill="#fff"/><circle cx="22" cy="13" r="3.6" fill="#fff"/><path d="M16 22.5 L22 25.5 L16 28.5 Z" fill="#3fbfad"/></svg>
<div class="il" style="left:-1.5px;top:374px">开奖直播</div>
<svg class="abs" style="left:117.79999999999995px;top:326px" width="43" height="44" viewBox="0 0 43 43" preserveAspectRatio="none"><rect width="43" height="43" rx="7" fill="#d81e78"/><path d="M30 16 A10.5 10.5 0 1 0 32 22" fill="none" stroke="#fff" stroke-width="2.6"/><path d="M26.5 13 L32.5 13.5 L30.5 19 Z" fill="#fff"/><path d="M21.5 16 V23 H27" fill="none" stroke="#fff" stroke-width="2.6"/></svg>
<div class="il" style="left:94.29999999999995px;top:374px">开奖记录</div>
<svg class="abs" style="left:213.5px;top:326px" width="43" height="44" viewBox="0 0 43 43" preserveAspectRatio="none"><rect width="43" height="43" rx="7" fill="#fbc02d"/><rect x="10.5" y="16.5" width="22" height="15" rx="1.5" fill="#e6b325" stroke="#5d4a1a" stroke-width="1.3"/><path d="M17 16.5 V13 H26 V16.5" fill="none" stroke="#5d4a1a" stroke-width="1.3"/><path d="M10.5 22 H32.5" stroke="#5d4a1a" stroke-width="1.3"/><rect x="20" y="20.5" width="3" height="3.4" fill="#5d4a1a"/><path d="M34 33 L39.5 38.5 M35 39 H40 V34" fill="none" stroke="#4a3a14" stroke-width="1.4"/></svg>
<div class="il" style="left:190px;top:374px">选号助手</div>
<svg class="abs" style="left:310.0px;top:326px" width="43" height="44" viewBox="0 0 43 43" preserveAspectRatio="none"><rect width="43" height="43" rx="7" fill="#4da3e3"/><path d="M12.5 13.5 H30.5 Q32 13.5 32 15 V27 Q32 28.5 30.5 28.5 H24 L21.5 31 L19 28.5 H12.5 Q11 28.5 11 27 V15 Q11 13.5 12.5 13.5 Z" fill="none" stroke="#fff" stroke-width="1.8"/><circle cx="17" cy="21" r="1.3" fill="#fff"/><circle cx="21.5" cy="21" r="1.3" fill="#fff"/><circle cx="26" cy="21" r="1.3" fill="#fff"/></svg>
<div class="il" style="left:286.5px;top:374px">留言板</div>
<svg class="abs" style="left:22.0px;top:403px" width="43" height="44" viewBox="0 0 43 43" preserveAspectRatio="none"><rect width="43" height="43" rx="7" fill="#f8649c"/><path d="M7 33.5 H36" stroke="#fff" stroke-width="2"/><rect x="9" y="24" width="3.4" height="7.5" fill="#fff"/><rect x="15.5" y="21" width="3.4" height="10.5" fill="#fff"/><rect x="22" y="23" width="3.4" height="8.5" fill="#fff"/><rect x="28.5" y="18" width="3.4" height="13.5" fill="#fff"/><path d="M8 21 L16 14.5 L22 18.5 L33 9.5" fill="none" stroke="#fff" stroke-width="2"/><path d="M28.5 8.5 H34.5 V14.5" fill="none" stroke="#fff" stroke-width="2"/></svg>
<div class="il" style="left:-1.5px;top:451px">港彩心水</div>
<svg class="abs" style="left:117.79999999999995px;top:403px" width="43" height="44" viewBox="0 0 43 43" preserveAspectRatio="none"><rect width="43" height="43" rx="7" fill="#18f23a"/><circle cx="21.5" cy="15" r="6.2" fill="#fff"/><path d="M8.5 34 Q8.5 24.5 21.5 24.5 Q34.5 24.5 34.5 34 Z" fill="#fff"/></svg>
<div class="il" style="left:94.29999999999995px;top:451px">澳彩心水</div>
<svg class="abs" style="left:213.5px;top:403px" width="43" height="44" viewBox="0 0 43 43" preserveAspectRatio="none"><rect width="43" height="43" rx="7" fill="#5a50f0"/><path d="M21.5 13 Q17 9.5 9.5 10.5 V30.5 Q17 29.5 21.5 33 Q26 29.5 33.5 30.5 V10.5 Q26 9.5 21.5 13 Z M21.5 13 V33" fill="none" stroke="#fff" stroke-width="2" stroke-linejoin="round"/><path d="M13 17 H17.5 M13 21.5 H17.5" stroke="#fff" stroke-width="1.8"/></svg>
<div class="il" style="left:190px;top:451px">台彩心水</div>
<svg class="abs" style="left:310.0px;top:403px" width="43" height="44" viewBox="0 0 43 43" preserveAspectRatio="none"><rect width="43" height="43" rx="7" fill="#fff"/><rect x="4" y="4.5" width="35" height="35" rx="5" fill="#ffbe50"/><path d="M11 29.5 L18 19.5 L22.5 25.5 L25.5 22 L32 29.5 Z" fill="#fff"/><circle cx="27.5" cy="15" r="2.3" fill="#fff"/></svg>
<div class="il" style="left:286.5px;top:451px">新港彩心水</div>
<div class="pl" style="left:6.0px;top:485px">四不像图</div>
<div class="pl" style="left:79.8px;top:485px">精准30码</div>
<div class="pl" style="left:153.6px;top:485px">特码一肖</div>
<div class="pl" style="left:227.4px;top:485px">澳门七字诗</div>
<div class="pl" style="left:301.2px;top:485px">赌神七肖</div>
<div class="pl" style="left:6.0px;top:515px">家畜野兽</div>
<div class="pl" style="left:79.8px;top:515px">十三合数</div>
<div class="pl" style="left:153.6px;top:515px">一尾中特</div>
<div class="pl" style="left:227.4px;top:515px">澳门字花报</div>
<div class="pl" style="left:301.2px;top:515px">精选四段</div>
<div class="pl" style="left:6.0px;top:545px">内幕资料</div>
<div class="pl" style="left:79.8px;top:545px">大小单双</div>
<div class="pl" style="left:153.6px;top:545px">九肖30码</div>
<div class="rn" style="left:0px;top:581px">
<div class="rl" style="top:7px;left:-9px">中国移动网络限制导致网站打开失败</div><div class="rl" style="top:28px;left:-9px">请大家尽量用联通或电信网络浏览网站</div>
<svg class="abs" style="left:6px;top:4px" width="36" height="50" viewBox="0 0 36 50"><g fill="none" stroke-linecap="round" stroke="#fff" stroke-width="6.3"><ellipse cx="15.6" cy="12.4" rx="12" ry="6.6" transform="rotate(-22 15.6 12.4)"/><path d="M19.2 4 C15 10 13.6 18 14.6 24 C15.6 30.6 21 29.6 22.4 22.6"/></g><g fill="none" stroke-linecap="round" stroke="#1a62b0" stroke-width="5"><ellipse cx="15.6" cy="12.4" rx="12" ry="6.6" transform="rotate(-22 15.6 12.4)"/><path d="M19.2 4 C15 10 13.6 18 14.6 24 C15.6 30.6 21 29.6 22.4 22.6"/></g><path d="M8.2 9.4 L10.6 6.4 M20.6 7 L24.2 4.6" stroke="#e02020" stroke-width="1.6"/><text x="16" y="41.6" font-size="8" font-weight="700" fill="#1a62b0" stroke="#fff" stroke-width="2.4" paint-order="stroke" text-anchor="middle" font-family="Liberation Sans,Noto Sans CJK SC,sans-serif">中国电信</text><text x="16" y="46.8" font-size="3.6" font-weight="700" fill="#4a82c4" stroke="#fff" stroke-width="1.8" paint-order="stroke" text-anchor="middle" font-family="Liberation Sans,sans-serif">CHINA TELECOM</text></svg>
<svg class="abs" style="left:311px;top:2.5px" width="57" height="46" viewBox="0 0 56 44"><g fill="none" stroke-linecap="round" stroke-linejoin="round"><path d="M21 17.5 L17.6 12.8 A5 5 0 1 1 25.2 6.6 L28 9.6 L30.8 6.6 A5 5 0 1 1 38.4 12.8 L35 17.5 M21 26.5 L17.6 31.2 A5 5 0 1 0 25.2 37.4 L28 34.4 L30.8 37.4 A5 5 0 1 0 38.4 31.2 L35 26.5 M19.5 12 L36.5 32 M36.5 12 L19.5 32 M14 22 H42" stroke="#ffe4e0" stroke-width="8"/><circle cx="8.6" cy="22" r="4.6" stroke="#ffe4e0" stroke-width="8"/><circle cx="47.4" cy="22" r="4.6" stroke="#ffe4e0" stroke-width="8"/><path d="M21 17.5 L17.6 12.8 A5 5 0 1 1 25.2 6.6 L28 9.6 L30.8 6.6 A5 5 0 1 1 38.4 12.8 L35 17.5 M21 26.5 L17.6 31.2 A5 5 0 1 0 25.2 37.4 L28 34.4 L30.8 37.4 A5 5 0 1 0 38.4 31.2 L35 26.5 M19.5 12 L36.5 32 M36.5 12 L19.5 32 M14 22 H42" stroke="#d60c10" stroke-width="5.2"/><circle cx="8.6" cy="22" r="4.6" stroke="#d60c10" stroke-width="5.2"/><circle cx="47.4" cy="22" r="4.6" stroke="#d60c10" stroke-width="5.2"/></g><g fill="#d60c10" stroke="#ffe4e0" stroke-width="0.9"><circle cx="8.6" cy="22" r="1.6"/><circle cx="47.4" cy="22" r="1.6"/><circle cx="21.5" cy="9.3" r="1.5"/><circle cx="34.5" cy="9.3" r="1.5"/><circle cx="21.5" cy="34.7" r="1.5"/><circle cx="34.5" cy="34.7" r="1.5"/><path d="M28 13 L30 15.3 L28 17.6 L26 15.3 Z M28 26.4 L30 28.7 L28 31 L26 28.7 Z M21.5 19.7 L23.6 22 L21.5 24.3 L19.4 22 Z M34.5 19.7 L36.6 22 L34.5 24.3 L32.4 22 Z"/></g></svg>
</div>
<div class="tt" style="left:6px;top:647px">四不像图</div>
<div class="pic" style="left:6px;top:687px">
<div class="mk" style="left:4px;top:0;width:355px;height:8px">✤✿MARKDLX&nbsp; ✤✿MARKDLX&nbsp; ✤✿MARKDLX&nbsp; ✤✿MARKDLX&nbsp; ✤✿MARKDLX&nbsp; ✤✿MARKDLX&nbsp; ✤✿MARKDLX&nbsp; ✤✿MARKDLX&nbsp; </div>
<div class="mk" style="left:0;top:8px;width:8px;height:132px;writing-mode:vertical-rl">✤✿MARKDLX&nbsp; ✤✿MARKDLX&nbsp; ✤✿MARKDLX&nbsp; ✤✿MARKDLX&nbsp; </div>
<div class="mk" style="right:0;top:8px;width:8px;height:132px;writing-mode:vertical-rl">✤✿MARKDLX&nbsp; ✤✿MARKDLX&nbsp; ✤✿MARKDLX&nbsp; ✤✿MARKDLX&nbsp; </div>
<div class="pin">
<div class="hl">玖玖出品四不像</div>
<div class="strip">2024辰龙年&nbsp; 第321期&nbsp; 澳门正版资料</div>
<svg class="abs" style="left:4px;top:10px" width="47" height="47" viewBox="0 0 48 48"><circle cx="24" cy="24" r="23.5" fill="#f4f6f2" stroke="#2f8f4a" stroke-width="1"/><circle cx="24" cy="22" r="16" fill="#14954a"/><path d="M24 12 Q29 20 24 29 Q19 20 24 12 Z M14 20 Q22 22 24 29 Q15 29 14 20 Z M34 20 Q26 22 24 29 Q33 29 34 20 Z" fill="#fff"/><path d="M12 31 H36 M14 34 H34" stroke="#fff" stroke-width="1.6"/><circle cx="24" cy="9.5" r="1.6" fill="#ffe14a"/><circle cx="17.5" cy="11.5" r="1.1" fill="#ffe14a"/><circle cx="30.5" cy="11.5" r="1.1" fill="#ffe14a"/><text x="24" y="45" font-size="5.5" font-weight="700" text-anchor="middle" fill="#1d7a3c" font-family="Liberation Sans,sans-serif">MACAO</text></svg>
<svg class="abs" style="left:12px;top:67px" width="25" height="25" viewBox="0 0 48 48"><circle cx="24" cy="24" r="23.5" fill="#f4f6f2" stroke="#2f8f4a" stroke-width="1"/><circle cx="24" cy="22" r="16" fill="#14954a"/><path d="M24 12 Q29 20 24 29 Q19 20 24 12 Z M14 20 Q22 22 24 29 Q15 29 14 20 Z M34 20 Q26 22 24 29 Q33 29 34 20 Z" fill="#fff"/><path d="M12 31 H36 M14 34 H34" stroke="#fff" stroke-width="1.6"/><circle cx="24" cy="9.5" r="1.6" fill="#ffe14a"/><circle cx="17.5" cy="11.5" r="1.1" fill="#ffe14a"/><circle cx="30.5" cy="11.5" r="1.1" fill="#ffe14a"/><text x="24" y="45" font-size="5.5" font-weight="700" text-anchor="middle" fill="#1d7a3c" font-family="Liberation Sans,sans-serif">MACAO</text></svg>
<svg class="abs" style="left:314px;top:67px" width="25" height="25" viewBox="0 0 48 48"><circle cx="24" cy="24" r="23.5" fill="#f4f6f2" stroke="#2f8f4a" stroke-width="1"/><circle cx="24" cy="22" r="16" fill="#14954a"/><path d="M24 12 Q29 20 24 29 Q19 20 24 12 Z M14 20 Q22 22 24 29 Q15 29 14 20 Z M34 20 Q26 22 24 29 Q33 29 34 20 Z" fill="#fff"/><path d="M12 31 H36 M14 34 H34" stroke="#fff" stroke-width="1.6"/><circle cx="24" cy="9.5" r="1.6" fill="#ffe14a"/><circle cx="17.5" cy="11.5" r="1.1" fill="#ffe14a"/><circle cx="30.5" cy="11.5" r="1.1" fill="#ffe14a"/><text x="24" y="45" font-size="5.5" font-weight="700" text-anchor="middle" fill="#1d7a3c" font-family="Liberation Sans,sans-serif">MACAO</text></svg>
<div class="scr">马35-11</div><div class="rod" style="left:15px"></div><div class="rod" style="left:129px"></div>
</div></div>
</div>
</div>
</body>
</html>
